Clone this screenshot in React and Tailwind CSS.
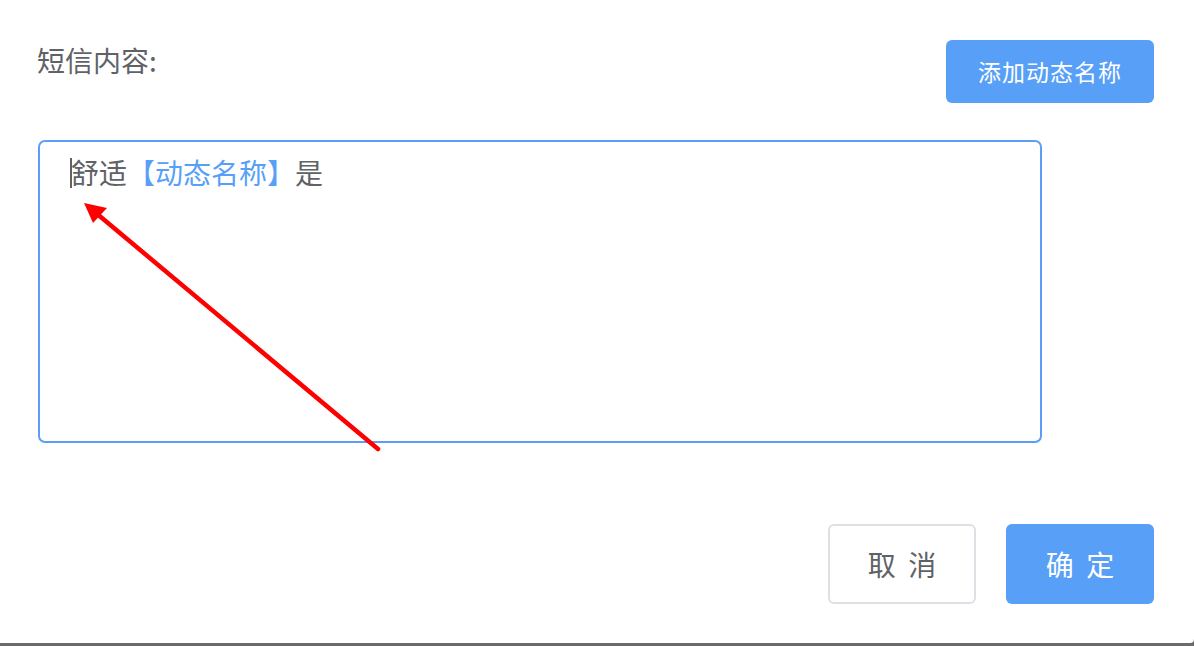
export default function App() {
  const font = { fontFamily: '"Noto Sans CJK SC", "Noto Sans", sans-serif' };
  return (
    <div className="w-[1194px] h-[646px] bg-[#6b6b6b] overflow-hidden" style={font}>
      <div className="relative w-[1194px] h-[643px] bg-white rounded-br-[4px] flex flex-col">
        <div className="flex justify-between items-start pl-[37px] pr-[40px] pt-[40px]">
          <div className="mt-[0px] text-[28px] leading-[40px] text-[#606266]">短信内容:</div>
          <button className="w-[208px] h-[63px] rounded-[6px] bg-[#589ff8] text-white text-[23px] tracking-[1px]">
            添加动态名称
          </button>
        </div>
        <div className="ml-[38px] mt-[37px] w-[1004px] h-[303px] border-2 border-[#5a9ef8] rounded-[7px] pl-[31px] pt-[8px] text-[28px] leading-[44px] text-[#606266]">
          <span className="relative">
            <span className="absolute left-[-1px] top-[6px] w-[2px] h-[30px] bg-[#606266]" />
            舒适<span className="text-[#589ff8]">【动态名称】</span>是
          </span>
        </div>
        <div className="flex justify-end gap-[30px] pr-[40px] mt-[81px]">
          <button className="w-[148px] h-[80px] rounded-[6px] border-2 border-[#dfe0e6] bg-white text-[28px] text-[#606266] tracking-[3px] pl-[3px]">
            取 消
          </button>
          <button className="w-[148px] h-[80px] rounded-[6px] bg-[#589ff8] text-[28px] text-white tracking-[3px] pl-[3px]">
            确 定
          </button>
        </div>
        <svg className="absolute left-0 top-0 pointer-events-none" width="1194" height="646">
          <line x1="378" y1="449" x2="96" y2="213" stroke="#ff0000" strokeWidth="4.5" strokeLinecap="round" />
          <polygon points="84,203 107,208 93,223" fill="#ff0000" />
        </svg>
      </div>
    </div>
  );
}
